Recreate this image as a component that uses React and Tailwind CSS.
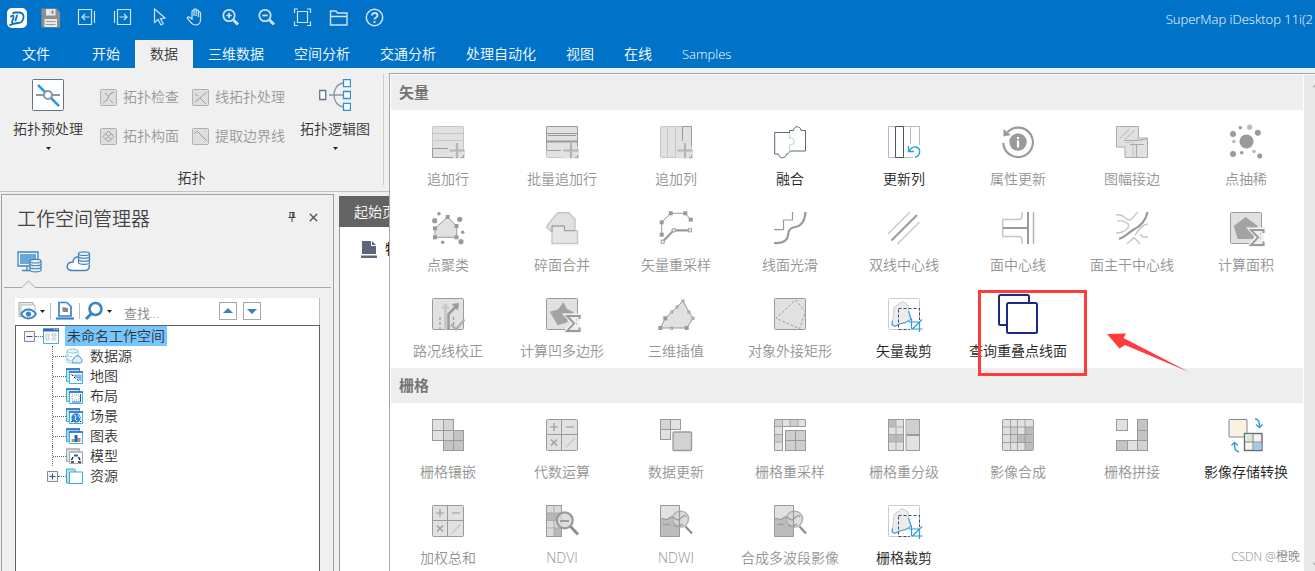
import { ChevronDown, ChevronUp, X } from "lucide-react";

const G = "#9a9a9a";
const L = "#c6c6c6";
const F = "#e1e1e1";
const M = "#c4c4c4";

const TABS = ["开始", "数据", "三维数据", "空间分析", "交通分析", "处理自动化", "视图", "在线", "Samples"];

/* ---------- shared icon parts ---------- */

const Box = ({ stroke = G, fill = F }) => <rect x=".5" y=".5" width="31" height="31" rx="1" fill={fill} stroke={stroke} />;
const Sq = ({ x, y, w = 10, h = w, fill = F, stroke = G }) => <rect x={x} y={y} width={w} height={h} fill={fill} stroke={stroke} />;
const Plus = () => (
  <>
    <path d="M16 24.5h17v8H16z" fill={F} />
    <path d="M25 17v15M17.5 24.5H32.5" stroke="#b4b4b4" strokeWidth="2.2" />
    <path d="M29 31.5h2.5V29" stroke={G} />
  </>
);
const Sigma = () => (
  <>
    <path d="M33.5 21v-3.5H20.5l7 7.500-7 8h13V29.5" stroke="#f4f4f4" strokeWidth="4" fill="#f4f4f4" />
    <path d="M33.5 21v-3H21l7 7.300-7 7.700h12.500V29.5" stroke={G} strokeWidth="2" fill="#eee" />
    <path d="M30.5 21v8" stroke={L} strokeDasharray="2 2" />
  </>
);
const Dots = ({ list, fill = G }) => list.map(([x, y, r]) => <circle key={`${x}-${y}`} cx={x} cy={y} r={r} fill={fill} />);
const Nodes = ({ list, s = 4, fill = G, stroke = "none" }) =>
  list.map(([x, y]) => <rect key={`${x}-${y}`} x={x - s / 2} y={y - s / 2} width={s} height={s} fill={fill} stroke={stroke} />);

const calc = (
  <>
    <Box />
    <path d="M15.500 .5v31M.5 15.500h31" stroke={G} />
    <path d="M4 8h8M8 4v8M20 8h8M5 20.500l6 6M11 20.500l-6 6" stroke={G} strokeWidth="1.2" />
    <path d="M19.500 28.500l9-9" stroke={L} strokeWidth="1.3" />
  </>
);
const water = (
  <>
    <path d="M.5 .5h19v31H.5z" fill={F} />
    <path d="M.5 14c3-2 4 1 7 0s3-3 6-1l6 1v17.500H.5z" fill="#bcbcbc" />
    <path d="M.5 .5h19v31H.5z" stroke={G} />
    <circle cx="20.5" cy="14" r="8" fill="#d4d4d4" fillOpacity=".8" stroke="#b0b0b0" strokeWidth="1.5" />
    <path d="M1 14c3-2 4 2 7 0s3-3 6-1 4 3 7 0 4-3 5-1M3 20c3-2 4 1 7-1M14 20c3 2 5 1 9-1M19.500 6v16" stroke={G} strokeWidth="1.2" />
    <path d="M25.500 21.500l6.500 7" stroke="#8e8e8e" strokeWidth="2.2" />
  </>
);
const clip = (
  <>
    <Box stroke="#c9ccd4" fill="#fff" />
    <path d="M14.500 3.500l5.500 3.500 1 7 2.500 8-6.500 3-5 1-5 2.500-3-2 1-6 1-11z" fill="#ececee" stroke="#c9ccd0" />
    <path d="M20.500 13l2.500 8.500-5.500 3-6 1.500-4.500 2.300-3-1.500.500-4" stroke="#4aa3df" strokeWidth="1.2" />
    <path d="M10.500 10.500h21v21h-21z" stroke="#3f4a60" strokeDasharray="3 2" />
    <path d="M22 22h12v11H22z" fill="#fff" />
    <path d="M23.500 20.500v10.500h11M21 24h10.500v10M24 31.500l10-10" stroke="#2d9cdb" strokeWidth="1.2" />
  </>
);

/* ---------- gallery icons, 32 x 32 ---------- */

const ICONS = {
  addRow: (
    <>
      <Box stroke={L} />
      <path d="M1 7.500h30M1 14.500h30" stroke={L} />
      <Plus />
      <path d="M16 22.500H.5v9H21" stroke={G} />
    </>
  ),
  batchRow: (
    <>
      <Box stroke={L} />
      <Plus />
      <path d="M31.500 20V.5H.5V24M1 24.500h14M1 7.500h30M2 9.500h28" stroke={G} />
      <path d="M0 15.500h32" stroke={G} strokeWidth="2" />
    </>
  ),
  addCol: (
    <>
      <Box stroke={L} />
      <path d="M7.500 1v30M15.500 1v30" stroke={L} />
      <Plus />
      <path d="M22.500 15V.5h9V20" stroke={G} />
    </>
  ),
  merge: (
    <>
      <path d="M15.500 6.500H.7v21.500h3.800c.5 5 7.500 5 8 0 1.500-.5 3-.5 3-2.500" stroke="#5b677d" />
      <path d="M15.500 6.500V4.500h4c0-5 7.500-5 7.500 0h4.500v20.500H15.500" stroke="#5b677d" />
      <path d="M15.500 7v18" stroke="#fff" strokeWidth="1.5" />
      <path d="M15.500 7v5c6-1 6 7 0 7v6" stroke="#c6e0d6" strokeWidth="1.3" />
    </>
  ),
  updateCol: (
    <>
      <path d="M.5 .5h31V19M.5 .5v31H25M22.500 1v17" stroke="#b4bac6" />
      <path d="M7.500 .5h8v31h-8z" fill="#fff" stroke="#4a566e" />
      <path d="M27 31.500c6-2 6-9 1-10.500-3-.8-5 1-7 4M20.500 20v5.500h5.500" stroke="#2d9cdb" strokeWidth="1.4" />
    </>
  ),
  attr: (
    <>
      <path d="M5.500 6a14.800 14.800 0 1 1-4.200 11" stroke={G} strokeWidth="2.2" />
      <path d="M1.500 3v7.500L9 9z" fill={G} />
      <circle cx="16" cy="16" r="8.7" fill={G} />
      <path d="M16 11v2M16 14.500v7" stroke="#fff" strokeWidth="2.2" />
    </>
  ),
  sheet: (
    <>
      <path d="M.5 .5h22V12h9v19.500H9V21H.5z" fill={F} stroke="#ababab" />
      <path d="M3.500 13l10-10M9 13.500L19 4M9 16.500h8V31M31 13H20" stroke={L} strokeWidth="1.2" />
      <path d="M8 14.500h15l9-2M14 18.500h14M20.500 19v12" stroke="#aaa" strokeWidth="1.2" />
    </>
  ),
  thin: (
    <>
      <Dots list={[[16.5, 15.5, 7], [3, 8, 3], [10.3, 1.7, 1.8], [27.8, 6.8, 3], [3, 28, 3], [11.7, 26.8, 1.8], [29.7, 30, 2.5]]} />
      <Dots fill="#bbb" list={[[19.7, 1.2, 2.6], [4, 15.5, 1.8], [24, 25.5, 1.8]]} />
    </>
  ),
  cluster: (
    <>
      <path d="M15.700 5l9 9.300v11H3v-9z" fill={F} stroke={G} />
      <Nodes list={[[15.7, 5], [24.5, 14], [24.5, 25.3], [3, 25.3], [3, 16.3]]} />
      <Dots list={[[7, 1.7, 1.8], [2.7, 8.7, 2.6], [27.7, 7.3, 2.6], [30.7, 20.3, 1.8], [29, 29.7, 2.6], [10.7, 30.3, 1.8]]} />
    </>
  ),
  sliver: (
    <>
      <path d="M.5 15l5.500 5h23V7.300L22.700 .7H12.500c-3 2-9 9-12 14.300z" fill={F} stroke={L} strokeWidth="1.5" />
      <path d="M6 14h12.500v4.700h13v12.800H6z" fill="#e6e6e6" stroke={L} strokeWidth="1.3" />
      <path d="M6 20v-6h12.500v4.700H29" stroke={G} />
    </>
  ),
  resample: (
    <>
      <path d="M1.700 22.700V10.300l9-9h14.600l5.400 6.400" stroke={G} />
      <Nodes list={[[1.7, 22.7], [1.7, 10.3], [10.7, 1.3], [25.3, 1.3], [30.7, 7.7]]} />
      <path d="M2.700 29.700l11-11.400H30" stroke={G} strokeWidth="2.2" />
      <Nodes fill="#fff" stroke={G} s={3} list={[[2.7, 29.7], [13.7, 18.3], [30, 18.3]]} />
    </>
  ),
  smooth: (
    <>
      <path d="M0 17.700h9.500V8h9V0" stroke={G} strokeWidth="1.2" />
      <path d="M0 31c8 .5 13.500-2 14-8 .3-5 3-7.500 7-8C28 14 31 8 31.500 0" stroke={G} strokeWidth="2.2" />
    </>
  ),
  dual: (
    <>
      <path d="M0 22L22 0M9.500 32L31.500 10" stroke={L} strokeWidth="1.3" />
      <path d="M3.500 28.500L29 3" stroke={G} strokeWidth="2" />
    </>
  ),
  center: (
    <>
      <path d="M20 0v4q0 3.500-3 3.500H.7v17H17q3 0 3 3.500v4" stroke={L} strokeWidth="1.5" />
      <path d="M1 16h25M26 0v32" stroke={G} strokeWidth="2" />
      <path d="M31.500 0v32" stroke="#b4b4b4" strokeWidth="1.5" />
    </>
  ),
  trunk: (
    <>
      <path d="M0 3c9-2 8 5 13 5 4 0 5-5 9-8M1 9c10-1 14 4 10 8-3 3-8 4-11 4M32 12c-8 1-9 7-13 11M32 25h-5l-3-3M11 32l7-6.500 6 6.500" stroke={L} strokeWidth="1.4" />
      <path d="M3 27c6-2 9-6 14-9C25 14 30 8 31.500 0" stroke={G} strokeWidth="2.2" />
    </>
  ),
  area: (
    <>
      <Box />
      <path d="M3.700 14l12-9 12 9-4.700 13H7.700z" fill="#a3a3a3" />
      <Sigma />
    </>
  ),
  road: (
    <>
      <Box />
      <path d="M13.500 32V10" stroke="#c8c8c8" strokeWidth="3" />
      <path d="M9 11l4.500-6.500L18 11z" fill="#c8c8c8" />
      <path d="M16.500 32V16l8-8" stroke={G} strokeWidth="2.5" />
      <path d="M27 5l-1 7.500L19.500 6z" fill={G} />
      <path d="M8 19v12M21.500 19v8" stroke={G} strokeDasharray="3 2" strokeWidth="1.3" />
      <path d="M19 26.500l5 5 8.500-10" stroke="#b0b0b0" strokeWidth="2.5" />
    </>
  ),
  concave: (
    <>
      <Box />
      <path d="M17.300 4.300L21 11l7 3.300-6.500 6 0 4-9.800 3L3.700 13.700 12 11.500z" fill="#a3a3a3" />
      <Sigma />
    </>
  ),
  interp: (
    <>
      <path d="M.3 30l5-9.700L23 3l6 11 4 6.300L26.700 30z" fill={F} stroke={G} />
      <Nodes list={[[0.3, 30], [5.3, 20.3], [26.7, 30]]} />
      <Nodes fill="#fff" stroke={G} s={2} list={[[23, 3], [17, 9], [11.7, 14], [29, 14], [33, 20.3], [11.7, 30.3]]} />
    </>
  ),
  bound: (
    <>
      <Box />
      <path d="M21.500 2l10 11.700-6 17L2 20.300z" stroke={G} strokeDasharray="2.5 2" />
    </>
  ),
  clip,
  overlap: (
    <>
      <rect x="-3" y="-3" width="30" height="30" rx="1.5" fill="#fff" stroke="#1b2a86" strokeWidth="2" />
      <rect x="5" y="5" width="30" height="30" rx="1.5" fill="#fff" stroke="#1b2a86" strokeWidth="2" />
    </>
  ),
  mosaic: (
    <>
      <Sq x=".5" y=".5" w={21} />
      <Sq x="11.5" y="11.5" w={20} fill={M} />
      <Sq x="11.5" y=".5" w={10} h={11} fill="#d4d4d4" />
      <path d="M.5 11.500h11v10M11.500 21.500h20M21.500 11.500v20" stroke={G} />
      <Sq x="11.5" y="11.5" w={10} fill="#d4d4d4" />
    </>
  ),
  calc,
  update: (
    <>
      <Sq x=".5" y=".5" fill="#d4d4d4" />
      <Sq x="10.5" y=".5" />
      <Sq x=".5" y="10.5" />
      <rect x="13" y="13" width="18.5" height="18.5" rx="1" fill="#d2d2d2" stroke={G} strokeWidth="1.3" />
    </>
  ),
  rResample: (
    <>
      <path d="M.5 .5h31v7h-23v24h-8z" fill={F} stroke={G} />
      <path d="M1 1h7v7H1zM16 1h8v6h-8zM1 15h7v8H1z" fill="#cfcfcf" />
      <path d="M8.500 1v6.500H1M16 1v6M24 1v6M1 15.500h7M1 23h7" stroke={G} strokeWidth=".8" />
      <Sq x="11.5" y="11.5" w={20} fill="#cecece" />
      <path d="M21.500 12v19M12 21.500h19" stroke={G} />
    </>
  ),
  reclass: (
    <>
      <Sq x=".5" y=".5" w={15} h={31} />
      <path d="M1 16h14v7H1zM1 1h7v7H1z" fill="#bcbcbc" />
      <path d="M8 1v30M1 8h14M1 15.500h14M1 23h14" stroke="#ababab" />
      <Sq x="18" y=".5" w={13.5} h={31} />
      <path d="M18.500 1h12.500v14.500H18.500z" fill="#cfcfcf" />
      <path d="M18 16h14" stroke={G} strokeWidth="2" />
    </>
  ),
  composite: (
    <>
      <Box />
      <path d="M8 8h8v8h7v8h8v7h-8v-7H8z" fill="#cfcfcf" />
      <path d="M23 8h8.500v23H23v-7h-8v-8h8z" fill="#bcbcbc" />
      <path d="M8.500 1v30M15.500 1v30M23 1v30M1 8h30M1 15.500h30M1 23.500h30" stroke={G} strokeWidth=".9" />
    </>
  ),
  joint: (
    <>
      <Sq x=".5" y=".5" w={11} />
      <Sq x="21.5" y=".5" w={10} h={11} fill={M} />
      <Sq x="21.5" y="11.5" fill={M} />
      <Sq x=".5" y="21.5" w={11} h={10} fill={M} />
      <Sq x="11.5" y="21.5" />
      <Sq x="21.5" y="21.5" fill="#d2d2d2" />
    </>
  ),
  convert: (
    <>
      <rect x="-1" y=".5" width="18" height="17.5" rx=".5" fill="#fbf2e1" stroke="#7b8796" />
      <rect x="14.5" y="14.5" width="17.5" height="17" fill="#fbf2e1" stroke="#5f6c7c" strokeWidth="1.4" />
      <path d="M15 15h8v8h-8z" fill="#d9ead6" />
      <path d="M23.500 23.500h8V31h-8z" fill="#9fcbe8" />
      <path d="M23 15v16M15 23h17" stroke="#7b8796" />
      <path d="M25 0c4 0 4.500 3 4.500 8M26 5.500l3.500 3 3-3M9 33c-4-1-4.500-3-4.500-9M1.500 26.500l3-3 3.500 3" stroke="#2d9cdb" strokeWidth="1.4" />
    </>
  ),
  ndvi: (
    <>
      <Sq x=".5" y=".5" w={15} h={31} fill="#dadada" />
      <path d="M1 8h14v7H1zM8 23h7v8H8z" fill="#b8b8b8" />
      <path d="M8 1v30M1 8h14M1 15.500h14M1 23h14" stroke="#ababab" />
      <circle cx="18.7" cy="15.3" r="8" fill="#d8d8d8" fillOpacity=".85" stroke={G} strokeWidth="2.2" />
      <path d="M14 16h9" stroke={G} strokeWidth="2" />
      <path d="M24.500 21.500l7.500 8" stroke="#8e8e8e" strokeWidth="3" />
    </>
  ),
  water,
};

const SECTIONS = [
  {
    title: "矢量",
    items: [
      ["addRow", "追加行"], ["batchRow", "批量追加行"], ["addCol", "追加列"], ["merge", "融合", true],
      ["updateCol", "更新列", true], ["attr", "属性更新"], ["sheet", "图幅接边"], ["thin", "点抽稀"],
      ["cluster", "点聚类"], ["sliver", "碎面合并"], ["resample", "矢量重采样"], ["smooth", "线面光滑"],
      ["dual", "双线中心线"], ["center", "面中心线"], ["trunk", "面主干中心线"], ["area", "计算面积"],
      ["road", "路况线校正"], ["concave", "计算凹多边形"], ["interp", "三维插值"], ["bound", "对象外接矩形"],
      ["clip", "矢量裁剪", true], ["overlap", "查询重叠点线面", true],
    ],
  },
  {
    title: "栅格",
    items: [
      ["mosaic", "栅格镶嵌"], ["calc", "代数运算"], ["update", "数据更新"], ["rResample", "栅格重采样"],
      ["reclass", "栅格重分级"], ["composite", "影像合成"], ["joint", "栅格拼接"], ["convert", "影像存储转换", true],
      ["calc", "加权总和"], ["ndvi", "NDVI"], ["water", "NDWI"], ["water", "合成多波段影像"],
      ["clip", "栅格裁剪", true],
    ],
  },
];

/* ---------- title bar ---------- */

const QUICK = [
  ["保存", <><path d="M1 1h14l3.500 3.500V19H1z" fill="#8e8e8e" stroke="#8e8e8e" /><path d="M5 1h9.500v6.500H5zM3.500 11h12.500v8H3.500z" fill="#e8e8e8" stroke="none" /><path d="M10.500 2.500h2V6h-2z" fill="#8e8e8e" stroke="none" /><path d="M5 13.500h9.500M5 16.500h9.500" stroke="#9a9a9a" /></>],
  ["后退", <path d="M1.500 1.500h13v15h-13zM17.500 3v12M12.500 9H5M8 6L5 9l3 3" />],
  ["前进", <path d="M4.500 1.500h13v15h-13zM1.500 3v12M6.500 9H14M11 6l3 3-3 3" />],
  ["选择", <path d="M5.500 1v13.500l3.500-3 3 5.500 2.200-1.200-2.700-5 4.500-.8z" />],
  ["漫游", <path d="M7 11V3.500c0-1.500 2-1.500 2 0V8 2c0-1.500 2.200-1.500 2.200 0v6V3c0-1.500 2.200-1.500 2.200 0v6V5c0-1.400 2.100-1.400 2.100 0v7c0 3-2 5-4.500 5-3 0-4.500-1.500-5.500-3L2.500 10.500c-.8-1.500 1-2.200 2-1.200z" />],
  ["放大", <><circle cx="8" cy="7.5" r="5.7" strokeWidth="1.7" /><path d="M12.500 12l4.500 4.500" strokeWidth="3" /><path d="M8 4.800v5.400M5.300 7.500h5.400" strokeWidth="1.7" /></>],
  ["缩小", <><circle cx="8" cy="7.5" r="5.7" strokeWidth="1.7" /><path d="M12.500 12l4.500 4.500" strokeWidth="3" /><path d="M5.300 7.500h5.400" strokeWidth="1.7" /></>],
  ["全幅", <><path d="M4.500 3.500h10v11h-10z" /><path d="M1.500 5v-4H5M14 1h3.500v4M17.500 13.500v4H14M5 17.500H1.500v-4" /></>],
  ["打开", <path d="M1.500 17V3h5.500l1.500 2H18v12zM1.500 8.500H18" strokeWidth="1.4" />],
  ["帮助", <><circle cx="9.5" cy="9.5" r="8.2" strokeWidth="1.5" /><path d="M7 7.500c0-3.500 5.500-3.300 5.500 0 0 2-3 2-3 4M9.500 13v2" strokeWidth="1.9" /></>],
];

function TitleBar() {
  return (
    <header className="flex h-[39px] shrink-0 items-center pb-1 pl-[7px] text-white">
      <svg className="h-5 w-5 shrink-0" viewBox="0 0 20 20" fill="none" aria-label="iDesktop">
        <rect width="20" height="20" rx="5" fill="#fff" />
        <path d="M4 8.500c1.500-1.500 3-1 2.500 1l-1.500 5M8 4.500h4.500c7 1 4 10.500-1.500 10.500-3 .3-5 .5-8 2M10 7.500l-1.500 5" stroke="#0873c4" strokeWidth="1.8" strokeLinecap="round" />
        <circle cx="6.5" cy="5" r="1.2" fill="#0873c4" />
      </svg>
      <div className="ml-3.5 flex gap-4">
        {QUICK.map(([label, icon]) => (
          <button key={label} type="button" aria-label={label} className="h-5 w-5">
            <svg className="h-5 w-5" viewBox="0 0 20 20" fill="none" stroke="#cfe3f4" strokeWidth="1.2">{icon}</svg>
          </button>
        ))}
      </div>
      <span className="ml-auto pt-1 pr-0.5 text-[13px] whitespace-nowrap">SuperMap iDesktop 11i(2</span>
    </header>
  );
}

function Tabs() {
  return (
    <nav className="flex h-[29px] shrink-0 pt-px text-sm text-white">
      <button type="button" className="pr-[27px] pl-[22px]">文件</button>
      {TABS.map((t) => (
        <button key={t} type="button" className={t === "数据" ? "bg-[#f0f0f0] px-[15px] text-[#333]" : t === "Samples" ? "px-[15px] text-[13px]" : "px-[15px]"}>{t}</button>
      ))}
    </nav>
  );
}

/* ---------- ribbon ---------- */

const Caret = () => (
  <svg className="h-[3px] w-[5px]" viewBox="0 0 5 3"><path d="M0 0h5L2.500 3z" fill="#222" /></svg>
);

function BigButton({ label, children }) {
  return (
    <button type="button" className="flex flex-col items-center self-start">
      <svg className="h-8 w-8" viewBox="0 0 32 32" fill="none">{children}</svg>
      <span className="mt-2 leading-5">{label}</span>
      <span className="mt-2"><Caret /></span>
    </button>
  );
}

const SMALL = [
  ["拓扑检查", "M3 14l4-3 3-6 4-2M5 4l3 3M10 11l3 3"],
  ["线拓扑处理", "M3 13L15 3M3 5l3 2M8 9l6 6"],
  ["拓扑构面", "M8.500 3l5.500 5.500L8.500 14 3 8.500zM5.700 5.700l5.500 5.500M11.200 5.700l-5.500 5.500"],
  ["提取边界线", "M2 6l3-3 10 10"],
];

function Ribbon() {
  return (
    <section className="flex h-[124px] shrink-0 border-b border-[#c2c2c2] bg-[#f0f0f0] text-sm text-[#333]">
      <div className="my-1.5 flex flex-col border-r border-[#cfcfcf] px-[13px]">
        <div className="flex flex-1 pt-[5px]">
          <BigButton label="拓扑预处理">
            <rect x=".5" y=".5" width="31" height="31" rx="1" fill="#fff" stroke="#66718a" />
            <path d="M6 6l21 21" stroke="#2d9be0" strokeWidth="2.5" />
            <path d="M4 16h24" stroke="#8b95a5" strokeWidth="2" />
            <circle cx="16" cy="16" r="4" fill="#fff" stroke="#8b95a5" strokeWidth="2" />
          </BigButton>
          <div className="mr-[15px] ml-[17px] grid grid-cols-[auto_auto] content-start gap-x-[13px] gap-y-[19px] pt-2 text-[#999]">
            {SMALL.map(([label, d]) => (
              <button key={label} type="button" disabled className="flex items-center gap-1.5 leading-5">
                <svg className="h-[17px] w-[17px]" viewBox="0 0 17 17" fill="none">
                  <rect x=".5" y=".5" width="16" height="16" rx="1" fill="#dedede" stroke="#b0b0b0" />
                  <path d={d} stroke="#9c9c9c" />
                </svg>
                {label}
              </button>
            ))}
          </div>
          <BigButton label="拓扑逻辑图">
            <path d="M.7 11.500h6v9h-6z" fill="#fff" stroke="#66718a" strokeWidth="1.3" />
            <path d="M10 16h14M24 4C12 6 12 26 24 28" stroke="#8b95a5" strokeWidth="1.3" />
            <path d="M24.500 .7h7v7h-7zM24.500 12.500h7v7h-7zM24.500 24.300h7v7h-7z" fill="#fff" stroke="#2d8fd5" strokeWidth="1.3" />
          </BigButton>
        </div>
        <div className="text-center leading-3.5">拓扑</div>
      </div>
    </section>
  );
}

/* ---------- workspace panel ---------- */

const Sheet = ({ back = "#bfe3d8", edge = "#37b6dc", top = "#2b66c8", children }) => (
  <>
    <path d="M.5 1h13v12.500H.5z" fill={back} stroke={edge} />
    <path d="M0 1h14" stroke={top} strokeWidth="1.5" />
    <path d="M3.500 4h13v11.500h-13z" fill="#fff" stroke={edge} />
    <path d="M3 4h14" stroke={top} strokeWidth="1.5" />
    {children}
  </>
);

const TREE = [
  ["数据源", <><path d="M1 3v10c0 2 5 2 6 2M12 8V3" stroke="#7fc6ea" fill="none" /><ellipse cx="6.5" cy="3" rx="5.5" ry="2" fill="#eaf6fd" stroke="#7fc6ea" /><path d="M1 7c1 1 3 1.500 5 1.500M1 11c1 1 3 1.500 4 1.500" stroke="#7fc6ea" fill="none" /><path d="M7 15c-2-3 0-4 1-4 0-4 6-4 6.500-1 2 1 2 5 0 5z" fill="#d9effa" stroke="#3b9ad0" /></>],
  ["地图", <Sheet><path d="M6 6.500h9.500V14z" fill="#7db8f0" /><path d="M5.500 6.500l2 2M8 9l6 5" stroke="#111" strokeDasharray="2 2" /></Sheet>],
  ["布局", <Sheet><path d="M6 7h7v5H6z" fill="none" stroke="#999" strokeDasharray="1 1" /><path d="M14.500 6v8H6" fill="none" stroke="#1464d8" /></Sheet>],
  ["场景", <Sheet><circle cx="10" cy="10" r="4.7" fill="#2f86d8" /><path d="M8 7l2 1-1 3 2 2M12 7l2 3" stroke="#d4f0ff" fill="none" /><path d="M5 14l2-1M14 13l1 1" stroke="#111" /></Sheet>],
  ["图表", <Sheet back="#a9c8ff"><path d="M5.500 11h3v3h-3zM11.500 10h3v4h-3z" fill="#c98a4a" /><path d="M8.500 7h3v7h-3z" fill="#1464d8" /></Sheet>],
  ["模型", <Sheet back="#cde8dd" edge="#a9a9b5" top="#b5b5b5"><path d="M8 6.500h4v2H8z" fill="#1464d8" /><path d="M7 9l-1.500 3M12.500 9l1.500 3M5 14h3M12 14h3" stroke="#222" strokeWidth="1.4" /></Sheet>],
  ["资源", <><path d="M.5 1h8l1 2v12H.5z" fill="#bfe3d8" stroke="#37a6dc" /><path d="M3.500 4h13v11.500h-13z" fill="#fff" stroke="#37a6dc" /></>],
];

const Toggle = ({ open }) => (
  <button type="button" aria-label={open ? "折叠" : "展开"} className="h-[11px] w-[11px] shrink-0">
    <svg viewBox="0 0 11 11" fill="none">
      <path d="M.5 .5h10v10H.5z" fill="#f4f4f4" stroke="#888" />
      <path d={open ? "M2.500 5.500h6" : "M2.500 5.500h6M5.500 2.500v6"} stroke="#2b4f9e" />
    </svg>
  </button>
);

const Cylinders = ({ x, y }) => (
  <g transform={`translate(${x} ${y})`} fill="#eaf3fa" stroke="#4585bd" strokeWidth="1.2">
    <path d="M.5 2v9c0 2.500 11 2.500 11 0V2" />
    <ellipse cx="6" cy="2.2" rx="5.5" ry="1.8" />
    <path d="M.5 5c0 2.300 11 2.300 11 0M.5 8c0 2.300 11 2.300 11 0" fill="none" />
  </g>
);

function WorkspacePanel() {
  return (
    <aside className="ml-px flex w-[333px] shrink-0 flex-col border border-b-0 border-[#a0a0a0] bg-[#f0f0f0]">
      <div className="flex items-center pt-2.5 pr-[13px] pl-[15px]">
        <h2 className="text-[19px] leading-7 text-[#444]">工作空间管理器</h2>
        <button type="button" aria-label="固定" className="mb-1 ml-auto">
          <svg className="h-2.5 w-2.5" viewBox="0 0 10 10" fill="none" stroke="#444"><path d="M3 .5v5M7 .5v5M2.500 .5h5M1.500 5.500h7M5 6v4" /><path d="M6 .5v5" strokeWidth="1.5" /></svg>
        </button>
        <button type="button" aria-label="关闭" className="mb-1 ml-2.5"><X size={13} strokeWidth={2.5} color="#555" /></button>
      </div>
      <div className="mt-[17px] flex gap-6 pl-[15px]">
        <button type="button" aria-label="本地">
          <svg className="h-6 w-[25px]" viewBox="0 0 25 24" fill="none">
            <path d="M1 2h20v14H1z" fill="#eaf3fa" stroke="#4585bd" strokeWidth="1.3" />
            <path d="M3 4h16v10H3z" fill="#6ba7da" />
            <path d="M5 20.500h8M10 16v4" stroke="#4585bd" strokeWidth="1.3" />
            <Cylinders x={12.5} y={9} />
          </svg>
        </button>
        <button type="button" aria-label="云端">
          <svg className="h-6 w-[25px]" viewBox="0 0 25 24" fill="none">
            <path d="M13 7c-4-.5-6 2-6 5-7 0-8 8.500-1 8.500h13c4 0 5-3 4-6" fill="#fff" stroke="#4585bd" strokeWidth="1.5" />
            <Cylinders x={12} y={1.5} />
          </svg>
        </button>
      </div>
      <svg className="mx-0.5 mt-1.5 h-2 w-auto self-stretch" viewBox="0 0 327 8" fill="none" preserveAspectRatio="xMinYMin slice">
        <path d="M0 7.500h18l6.500-6.500 6.500 6.500H340" stroke="#a8a8a8" />
      </svg>
      <div className="mx-[13px] mt-2.5 flex h-[27px] items-center border-r border-[#bbb] bg-white pb-px pl-[3px]">
        <button type="button" aria-label="显示" className="flex items-center gap-0.5">
          <svg className="h-5 w-5" viewBox="0 0 20 20" fill="none">
            <path d="M1 1.500h14v14H1z" fill="#ececec" stroke="#aaa" /><path d="M3 4h14v8H3z" fill="#fff" stroke="#bbb" />
            <path d="M3 13c4-6 11-6 15 0-4 6-11 6-15 0z" fill="#fff" stroke="#3b82c4" strokeWidth="1.8" /><circle cx="10.5" cy="13" r="2.6" fill="#3b82c4" />
          </svg>
          <Caret />
        </button>
        <span className="mx-[5px] h-4 w-px bg-[#bbb]" />
        <button type="button" aria-label="定位">
          <svg className="h-5 w-[18px]" viewBox="0 0 18 20" fill="none">
            <path d="M3 1.500h8l4 4V15H3z" fill="#fff" stroke="#3b82c4" strokeWidth="1.7" /><path d="M6 6h4v4H6z" fill="#bbb" /><path d="M7 7h5v4H7z" fill="#888" /><path d="M0 17.500h18" stroke="#3b82c4" strokeWidth="2.2" />
          </svg>
        </button>
        <span className="mx-[5px] h-4 w-px bg-[#bbb]" />
        <button type="button" aria-label="搜索" className="flex items-center gap-1">
          <svg className="h-5 w-[18px]" viewBox="0 0 18 20" fill="none" stroke="#3b82c4"><circle cx="10.5" cy="8" r="6" strokeWidth="2.6" /><path d="M6.500 12.500L1 18" strokeWidth="3" /></svg>
          <Caret />
        </button>
        <input type="text" aria-label="查找" placeholder="查找..." className="ml-3 w-[95px] pt-1 text-[13px] leading-5 outline-none placeholder:text-[#888]" />
        {["M3 10h10L8 5z", "M3 6h10l-5 5z"].map((d, i) => (
          <button key={d} type="button" aria-label={i ? "下一个" : "上一个"} className="mr-1.5 h-[18px] w-[18px] shrink-0 border border-[#a8a8a8] bg-white">
            <svg viewBox="0 0 16 16"><path d={d} fill="#3b7fc0" /></svg>
          </button>
        ))}
      </div>
      <div className="mx-[13px] flex-1 border border-b-0 border-[#606060] bg-white text-sm text-[#333]">
        <div className="flex h-5 items-center pl-2">
          <Toggle open />
          <span className="w-2 border-t border-dotted border-[#666]" />
          <svg className="h-4 w-4" viewBox="0 0 16 16" fill="none">
            <path d="M.5 1h15v14.500H.5z" fill="#fff" stroke="#37b6dc" /><path d="M0 2h16" stroke="#2b66c8" strokeWidth="3" />
            <path d="M11 1.500h1M13.500 1.500h1" stroke="#fff" /><path d="M3 6h3v6H3zM9 6h4v2H9zM9 10h4v2H9z" fill="#eee" stroke="#ccc" />
          </svg>
          <span className="ml-1.5 bg-[#78c6ff] px-0.5 leading-5">未命名工作空间</span>
        </div>
        <ul className="ml-9">
          {TREE.map(([label, icon]) => {
            const last = label === "资源";
            return (
              <li key={label} className={last ? "-ml-[5px] flex h-5 items-center" : "flex h-5 items-center border-l border-dotted border-[#666]"}>
                {last && <Toggle />}
                <span className={last ? "w-2 border-t border-dotted border-[#666]" : "w-[13px] border-t border-dotted border-[#666]"} />
                <svg className="h-4 w-[17px]" viewBox="0 0 17 16">{icon}</svg>
                <span className="ml-[7px]">{label}</span>
              </li>
            );
          })}
        </ul>
      </div>
    </aside>
  );
}

/* ---------- gallery ---------- */

function Tool({ icon, label, enabled }) {
  return (
    <div className="relative">
      <button type="button" disabled={!enabled} className={`flex w-full flex-col items-center pt-4 pb-[7px] text-sm ${enabled ? "text-[#222]" : "text-[#949494]"}`}>
        <svg className="h-8 w-8 overflow-visible" viewBox="0 0 32 32" fill="none">{ICONS[icon]}</svg>
        <span className="mt-[11px] leading-5 whitespace-nowrap">{label}</span>
      </button>
      {icon === "overlap" && (
        <>
          <span className="absolute top-2 left-[17px] z-10 h-[86px] w-[109px] border-3 border-[#ff3b3b]" />
          <svg className="absolute top-[51px] left-[146px] z-10 h-10 w-[82px]" viewBox="0 0 82 40">
            <path d="M0 1l19-.5-2.500 4.500L82 39 18 12l-5.500 3.500z" fill="#ff3b3b" />
          </svg>
        </>
      )}
    </div>
  );
}

function Gallery() {
  return (
    <div className="absolute top-[73px] right-0 bottom-0 left-[389px] flex overflow-hidden border-t border-l border-[#a6a6a6] bg-white pt-px pl-px">
      <div className="flex-1">
        {SECTIONS.map((s) => (
          <section key={s.title}>
            <h3 className="h-[35px] bg-[#eee] pl-2 text-[15px] leading-[35px] font-bold text-[#757575]">{s.title}</h3>
            <div className="grid grid-cols-8">
              {s.items.map(([icon, label, enabled]) => <Tool key={label} icon={icon} label={label} enabled={enabled} />)}
            </div>
          </section>
        ))}
      </div>
      <div className="ml-px flex w-[11px] flex-col items-start justify-between overflow-hidden bg-[#e9e9e9] pt-1 pl-1.5 text-[#aaa]">
        <ChevronUp size={13} className="shrink-0" />
        <ChevronDown size={13} className="shrink-0" />
      </div>
      <span className="absolute right-[15px] bottom-1.5 text-xs leading-4 text-[#8c8c8c]">CSDN @橙晚</span>
    </div>
  );
}

export default function App() {
  return (
    <div className="relative flex h-screen flex-col overflow-hidden bg-[#f0f0f0] font-['Open_Sans','Noto_Sans_CJK_SC',sans-serif] font-[350]">
      <div className="shrink-0 bg-[#0072c8]">
        <TitleBar />
        <Tabs />
      </div>
      <Ribbon />
      <main className="flex min-h-0 flex-1 pt-0.5">
        <WorkspacePanel />
        <div className="ml-[5px] flex flex-1 flex-col pt-0.5">
          <div className="h-[31px] bg-[#636363] pl-[15px] text-sm leading-[31px] text-white">起始页</div>
          <div className="flex flex-1 items-start border-l border-[#999] bg-white pt-3 pl-[21px] text-sm">
            <svg className="mt-0.5 h-[17px] w-4" viewBox="0 0 16 17"><path d="M1 0h9v5h5v8H1zM11 0l4 4h-4zM0 14.500h16V17H0z" fill="#5c667c" /></svg>
            <span className="ml-2">特</span>
          </div>
        </div>
      </main>
      <Gallery />
    </div>
  );
}
